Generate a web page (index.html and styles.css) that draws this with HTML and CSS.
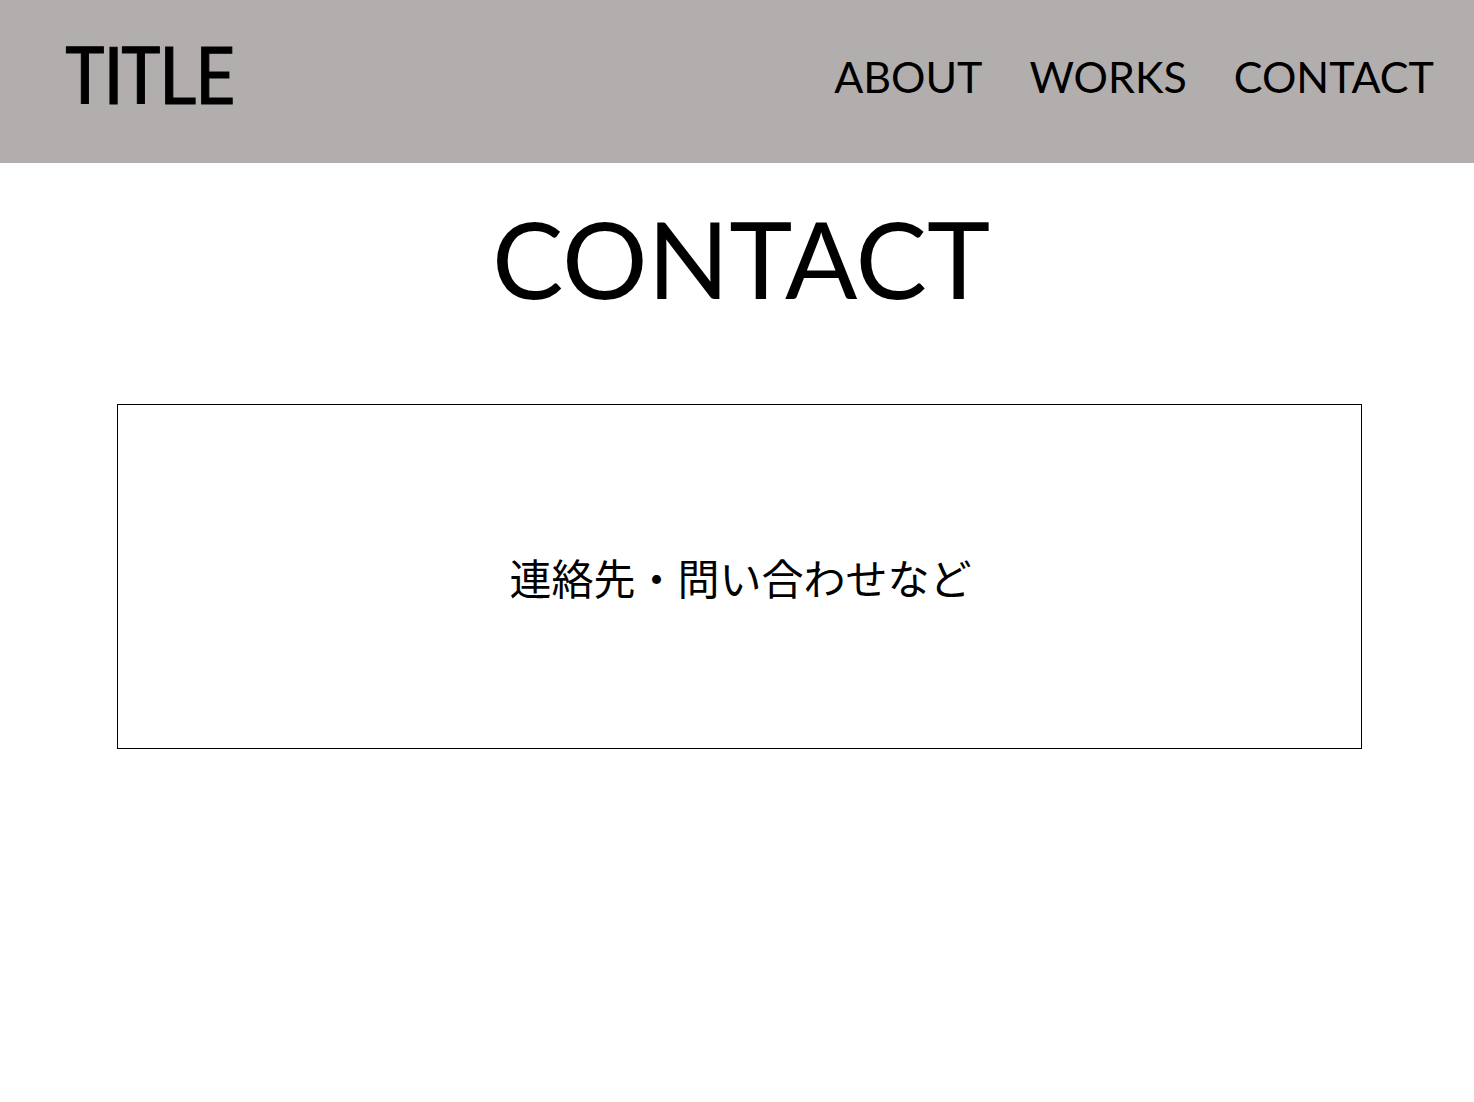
FILE: index.html
```html
<!DOCTYPE html>
<html lang="ja">
<head>
  <meta charset="UTF-8">
  <title>CONTACT</title>
  <meta name="viewport" content="width=device-width, initial-scale=1.0">
  <link rel="stylesheet" href="styles.css">
</head>
<body>
  <header class="site-header">
    <div class="site-title">TITLE</div>
    <nav class="site-nav">
      <a href="#">ABOUT</a>
      <a href="#">WORKS</a>
      <a href="#">CONTACT</a>
    </nav>
  </header>

  <main class="page">
    <h1 class="page-title">CONTACT</h1>
    <div class="contact-box">
      <p>連絡先・問い合わせなど</p>
    </div>
  </main>
</body>
</html>
```
FILE: styles.css
```css
* {
  box-sizing: border-box;
}

body {
  margin: 0;
  padding: 0;
  background: #fff;
  color: #000;
  font-family: 'Lato', 'Noto Sans CJK JP', sans-serif;
}

.site-header {
  display: flex;
  align-items: center;
  justify-content: space-between;
  height: 163px;
  padding: 0 40px 0 64px;
  background-color: #b3aeae;
}

.site-title {
  font-family: 'Liberation Sans Narrow', 'Roboto Condensed', 'Liberation Sans', sans-serif;
  font-size: 80px;
  font-weight: 400;
  letter-spacing: -2.2px;
  line-height: 1;
  margin-top: -10px;
  -webkit-text-stroke: 1px #000;
}

.site-nav {
  display: flex;
  gap: 47px;
  margin-top: -10px;
}

.site-nav a {
  color: #000;
  text-decoration: none;
  font-size: 43px;
  line-height: 1;
}

.page-title {
  margin: 41px 0 0;
  padding-left: 8px;
  text-align: center;
  font-size: 107px;
  font-weight: 400;
  line-height: 1;
}

.contact-box {
  display: flex;
  align-items: center;
  justify-content: center;
  width: 1245px;
  height: 345px;
  margin: 93px 0 0 117px;
  border: 1px solid #000;
}

.contact-box p {
  margin: 0 0 0 2px;
  font-family: 'Noto Sans CJK JP', sans-serif;
  font-size: 42px;
}
```
